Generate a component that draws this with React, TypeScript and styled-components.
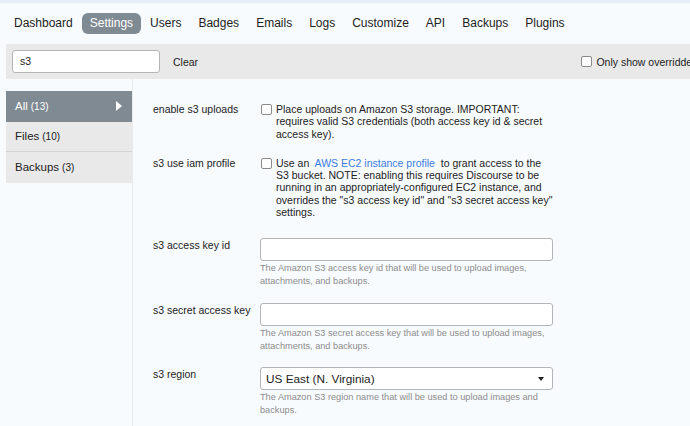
import React from "react";
import styled, { createGlobalStyle } from "styled-components";

const Global = createGlobalStyle`
  html, body { margin: 0; padding: 0; overflow: hidden; }
  body {
    background: #f8fbfe;
    font-family: "Liberation Sans", Arial, Helvetica, sans-serif;
    color: #222;
  }
`;

const Page = styled.div`
  width: 704px;
  min-height: 426px;
  border-top: 3px solid #e7eef8;
  padding: 0 0 0 6px;
  box-sizing: border-box;
  display: flex;
  flex-direction: column;
`;

const Nav = styled.nav`
  display: flex;
  align-items: center;
  height: 41px;
`;

const NavItem = styled.a<{ $active?: boolean }>`
  font-size: 12px;
  line-height: 21px;
  height: 21px;
  padding: 0 8px;
  margin-right: 1px;
  border-radius: 6px;
  color: ${(p) => (p.$active ? "#fff" : "#222")};
  background: ${(p) => (p.$active ? "#7f8a93" : "transparent")};
  white-space: nowrap;
`;

const FilterBar = styled.div`
  height: 35px;
  background: #e9e9e9;
  display: flex;
  align-items: center;
  padding: 0 6px;
`;

const SearchInput = styled.div`
  width: 148px;
  height: 23px;
  box-sizing: border-box;
  background: #fff;
  border: 1px solid #b5b5b5;
  border-radius: 3px;
  font-size: 10.5px;
  line-height: 21px;
  padding-left: 7px;
`;

const ClearButton = styled.span`
  font-size: 10.5px;
  margin-left: 13px;
`;

const Spacer = styled.div`
  flex: 1;
`;

const OverrideToggle = styled.label`
  display: flex;
  align-items: center;
  font-size: 10.5px;
  gap: 4px;
  white-space: nowrap;
`;

const Box = styled.span`
  display: inline-block;
  width: 9px;
  height: 9px;
  border: 1px solid #8a8a8a;
  border-radius: 2px;
  background: #fff;
  flex: none;
`;

const Main = styled.div`
  display: flex;
  flex: 1;
`;

const Sidebar = styled.ul`
  list-style: none;
  margin: 12px 0 0;
  padding: 0;
  width: 126px;
  flex: none;
`;

const SideItem = styled.li<{ $active?: boolean; $last?: boolean }>`
  height: 30.5px;
  display: flex;
  align-items: center;
  padding: 0 10px 0 9px;
  box-sizing: border-box;
  background: ${(p) => (p.$active ? "#7f8a93" : "#e9e9e9")};
  color: ${(p) => (p.$active ? "#fff" : "#222")};
  border-bottom: ${(p) => (p.$active || p.$last ? "none" : "1px solid #d2d2d2")};
  font-size: 11.5px;
`;

const Count = styled.span`
  font-size: 10px;
  margin-left: 3px;
`;

const Arrow = styled.span`
  margin-left: auto;
  width: 0;
  height: 0;
  border-top: 5px solid transparent;
  border-bottom: 5px solid transparent;
  border-left: 6px solid #fff;
`;

const Content = styled.div`
  flex: 1;
  border-left: 1px solid #e8ebee;
  padding: 24px 0 0 20px;
`;

const Setting = styled.div<{ $gap: number }>`
  display: flex;
  margin-bottom: ${(p) => p.$gap}px;
`;

const Label = styled.div<{ $top?: number }>`
  width: 107px;
  flex: none;
  font-size: 10.5px;
  line-height: 12.3px;
  padding-top: ${(p) => p.$top ?? 0}px;
`;

const CheckRow = styled.div`
  display: flex;
  align-items: flex-start;
  width: 294px;
`;

const CheckBox = styled(Box)`
  margin: 1px 4px 0 1px;
`;

const Desc = styled.div`
  font-size: 10.5px;
  line-height: 12.3px;
`;

const Link = styled.a`
  color: #3b7ce0;
`;

const Field = styled.div`
  width: 293px;
`;

const TextBox = styled.div`
  height: 23px;
  box-sizing: border-box;
  border: 1px solid #b5b5b5;
  border-radius: 3px;
  background: #fff;
  display: flex;
  align-items: center;
  padding: 0 8px 0 5px;
  font-size: 11.8px;
`;

const Caret = styled.span`
  margin-left: auto;
  width: 0;
  height: 0;
  border-left: 3.5px solid transparent;
  border-right: 3.5px solid transparent;
  border-top: 4px solid #222;
`;

const Help = styled.div`
  font-size: 9.2px;
  line-height: 13px;
  color: #8c8c8c;
  margin-top: 1px;
`;

const navItems = [
  "Dashboard",
  "Settings",
  "Users",
  "Badges",
  "Emails",
  "Logs",
  "Customize",
  "API",
  "Backups",
  "Plugins",
];

export default function App() {
  return (
    <>
      <Global />
      <Page>
        <Nav>
          {navItems.map((n) => (
            <NavItem key={n} $active={n === "Settings"}>
              {n}
            </NavItem>
          ))}
        </Nav>
        <FilterBar>
          <SearchInput>s3</SearchInput>
          <ClearButton>Clear</ClearButton>
          <Spacer />
          <OverrideToggle>
            <Box />
            Only show overridden
          </OverrideToggle>
        </FilterBar>
        <Main>
          <Sidebar>
            <SideItem $active>
              All<Count>(13)</Count>
              <Arrow />
            </SideItem>
            <SideItem>
              Files<Count>(10)</Count>
            </SideItem>
            <SideItem $last>
              Backups<Count>(3)</Count>
            </SideItem>
          </Sidebar>
          <Content>
            <Setting $gap={17}>
              <Label>enable s3 uploads</Label>
              <CheckRow>
                <CheckBox />
                <Desc>
                  Place uploads on Amazon S3 storage. IMPORTANT: requires valid S3
                  credentials (both access key id &amp; secret access key).
                </Desc>
              </CheckRow>
            </Setting>
            <Setting $gap={20}>
              <Label>s3 use iam profile</Label>
              <CheckRow>
                <CheckBox />
                <Desc>
                  Use an&nbsp; <Link>AWS EC2 instance profile</Link>&nbsp; to grant
                  access to the S3 bucket. NOTE: enabling this requires Discourse
                  to be running in an appropriately-configured EC2 instance, and
                  overrides the "s3 access key id" and "s3 secret access key"
                  settings.
                </Desc>
              </CheckRow>
            </Setting>
            <Setting $gap={15}>
              <Label $top={1}>s3 access key id</Label>
              <Field>
                <TextBox />
                <Help>
                  The Amazon S3 access key id that will be used to upload images,
                  attachments, and backups.
                </Help>
              </Field>
            </Setting>
            <Setting $gap={14}>
              <Label $top={1}>s3 secret access key</Label>
              <Field>
                <TextBox />
                <Help>
                  The Amazon S3 secret access key that will be used to upload
                  images, attachments, and backups.
                </Help>
              </Field>
            </Setting>
            <Setting $gap={0}>
              <Label $top={1}>s3 region</Label>
              <Field>
                <TextBox>
                  US East (N. Virginia)
                  <Caret />
                </TextBox>
                <Help>
                  The Amazon S3 region name that will be used to upload images and
                  backups.
                </Help>
              </Field>
            </Setting>
          </Content>
        </Main>
      </Page>
    </>
  );
}
